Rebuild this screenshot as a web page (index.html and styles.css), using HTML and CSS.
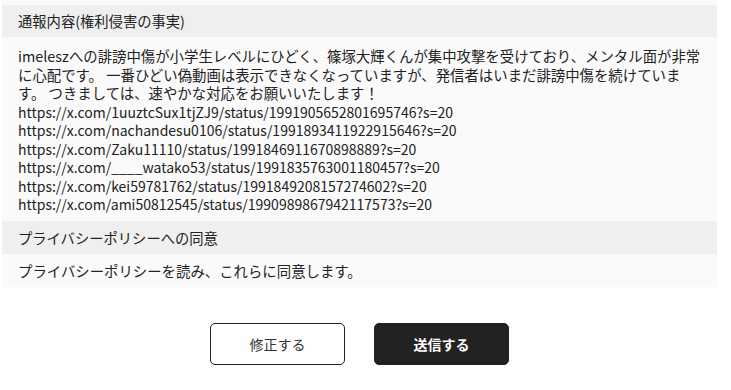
FILE: index.html
```html
<!DOCTYPE html>
<html lang="ja">
<head>
<meta charset="utf-8">
<link rel="stylesheet" href="styles.css">
</head>
<body>
<div class="form">
  <div class="tail"></div>
  <div class="label">通報内容(権利侵害の事実)</div>
  <div class="value">
    <div class="message">imeleszへの誹謗中傷が小学生レベルにひどく、篠塚大輝くんが集中攻撃を受けており、メンタル面が非常に心配です。 一番ひどい偽動画は表示できなくなっていますが、発信者はいまだ誹謗中傷を続けています。 つきましては、速やかな対応をお願いいたします！</div>
    <div class="urls">https://x.com/1uuztcSux1tjZJ9/status/1991905652801695746?s=20<br>https://x.com/nachandesu0106/status/1991893411922915646?s=20<br>https://x.com/Zaku11110/status/1991846911670898889?s=20<br>https://x.com/____watako53/status/1991835763001180457?s=20<br>https://x.com/kei59781762/status/1991849208157274602?s=20<br>https://x.com/ami50812545/status/1990989867942117573?s=20</div>
  </div>
  <div class="label label2">プライバシーポリシーへの同意</div>
  <div class="value value2"><div class="message">プライバシーポリシーを読み、これらに同意します。</div></div>
  <div class="actions">
    <button class="btn btn-outline">修正する</button>
    <button class="btn btn-solid">送信する</button>
  </div>
</div>
</body>
</html>
```
FILE: styles.css
```css
html, body {
  margin: 0;
  padding: 0;
  background: #ffffff;
}
body {
  font-family: "Noto Sans CJK JP", "Noto Sans", sans-serif;
  color: #222222;
  font-size: 14px;
}
.form {
  width: 715px;
  margin-left: 2px;
}
.tail {
  height: 5px;
  background: #fafafa;
}
.label {
  background: #efefef;
  height: 32px;
  line-height: 32px;
  padding: 0 16px;
  font-size: 14.3px;
}
.label2 {
  height: 33px;
  line-height: 33px;
}
.value {
  background: #fafafa;
  padding: 10px 16px 7px;
  line-height: 18.5px;
}
.message {
  font-size: 14.4px;
}
.urls {
  font-size: 14px;
}
.value2 {
  padding: 8px 16px 7px;
}
.actions {
  display: flex;
  justify-content: center;
  gap: 29px;
  margin-top: 36px;
}
.btn {
  width: 135px;
  height: 42px;
  border-radius: 5px;
  font-family: "Noto Sans CJK JP", "Noto Sans", sans-serif;
  font-size: 14px;
  box-sizing: border-box;
  cursor: pointer;
}
.btn-outline {
  background: #ffffff;
  border: 1px solid #222222;
  color: #333333;
}
.btn-solid {
  background: #222222;
  border: 1px solid #222222;
  color: #ffffff;
  font-weight: bold;
}
```
